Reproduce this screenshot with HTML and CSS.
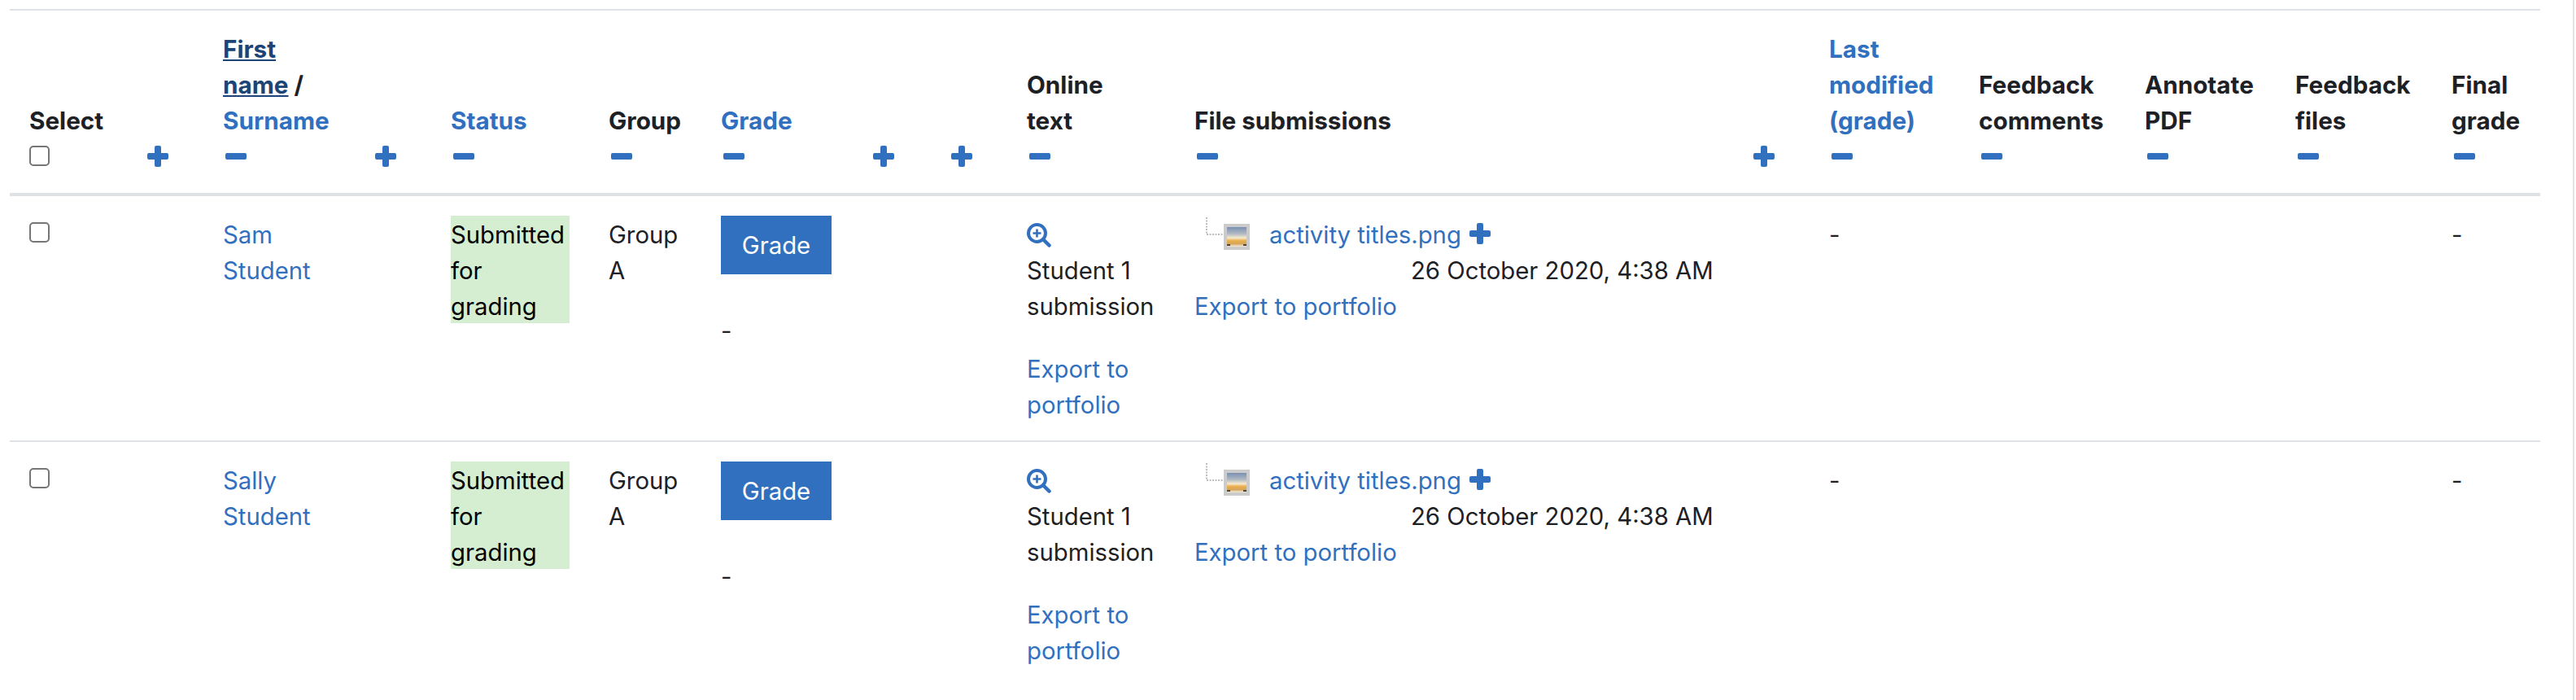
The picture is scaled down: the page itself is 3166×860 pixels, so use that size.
FILE: index.html
```html
<!DOCTYPE html>
<html lang="en">
<head>
<meta charset="utf-8">
<title>Submissions</title>
<link rel="stylesheet" href="styles.css">
</head>
<body>
<svg class="defs" width="0" height="0" aria-hidden="true">
  <symbol id="plus" viewBox="0 0 26 26"><path d="M11 0h4a2 2 0 0 1 2 2v7h7a2 2 0 0 1 2 2v4a2 2 0 0 1-2 2h-7v7a2 2 0 0 1-2 2h-4a2 2 0 0 1-2-2v-7H2a2 2 0 0 1-2-2v-4a2 2 0 0 1 2-2h7V2a2 2 0 0 1 2-2z"/></symbol>
  <symbol id="minus" viewBox="0 0 26 8"><rect width="26" height="8" rx="2"/></symbol>
  <symbol id="zoom" viewBox="0 0 30 30"><circle cx="12.5" cy="12.5" r="10.5" fill="none" stroke="currentColor" stroke-width="4"/><path d="M20 20l7.5 7.5" stroke="currentColor" stroke-width="4.5" stroke-linecap="round"/><path d="M12.5 7.5v10M7.5 12.5h10" stroke="currentColor" stroke-width="2.6"/></symbol>
  <symbol id="tree" viewBox="0 0 22 22"><path d="M1 0v21h21" fill="none" stroke="#bdbdbd" stroke-width="2" stroke-dasharray="2 1.5"/></symbol>
  <linearGradient id="sky" x1="0" y1="0" x2="0" y2="1">
    <stop offset="0" stop-color="#7a90b2"/><stop offset=".35" stop-color="#b3bac4"/><stop offset=".55" stop-color="#f6ead0"/><stop offset=".7" stop-color="#eaae48"/><stop offset=".85" stop-color="#d4a55a"/><stop offset="1" stop-color="#f3ecdc"/>
  </linearGradient>
  <symbol id="thumb" viewBox="0 0 32 32"><rect width="32" height="32" fill="#cbcbcb"/><rect x="4" y="4" width="24" height="24" fill="url(#sky)"/><rect x="4" y="25" width="4" height="2" fill="#4c4436"/><rect x="24" y="25" width="4" height="2" fill="#4c4436"/></symbol>
</svg>

<table class="grading">
  <colgroup>
    <col class="w-select"><col class="w-hidden"><col class="w-name"><col class="w-hidden"><col class="w-status"><col class="w-group"><col class="w-grade"><col class="w-hidden"><col class="w-hidden"><col class="w-online"><col class="w-file"><col class="w-hidden"><col class="w-last"><col class="w-fb"><col class="w-annot"><col class="w-files"><col class="w-final">
  </colgroup>
  <thead>
    <tr>
      <th><div>Select</div><div class="cmd"><input type="checkbox" class="check"></div></th>
      <th><div class="cmd"><svg class="ic plus"><use href="#plus"/></svg></div></th>
      <th><div><a class="active" href="#">First name</a> / <a href="#">Surname</a></div><div class="cmd"><svg class="ic minus"><use href="#minus"/></svg></div></th>
      <th><div class="cmd"><svg class="ic plus"><use href="#plus"/></svg></div></th>
      <th><div><a href="#">Status</a></div><div class="cmd"><svg class="ic minus"><use href="#minus"/></svg></div></th>
      <th><div>Group</div><div class="cmd"><svg class="ic minus"><use href="#minus"/></svg></div></th>
      <th><div><a href="#">Grade</a></div><div class="cmd"><svg class="ic minus"><use href="#minus"/></svg></div></th>
      <th><div class="cmd"><svg class="ic plus"><use href="#plus"/></svg></div></th>
      <th><div class="cmd"><svg class="ic plus"><use href="#plus"/></svg></div></th>
      <th><div>Online<br>text</div><div class="cmd"><svg class="ic minus"><use href="#minus"/></svg></div></th>
      <th><div>File submissions</div><div class="cmd"><svg class="ic minus"><use href="#minus"/></svg></div></th>
      <th><div class="cmd"><svg class="ic plus"><use href="#plus"/></svg></div></th>
      <th><div><a href="#">Last modified (grade)</a></div><div class="cmd"><svg class="ic minus"><use href="#minus"/></svg></div></th>
      <th><div>Feedback comments</div><div class="cmd"><svg class="ic minus"><use href="#minus"/></svg></div></th>
      <th><div>Annotate PDF</div><div class="cmd"><svg class="ic minus"><use href="#minus"/></svg></div></th>
      <th><div>Feedback files</div><div class="cmd"><svg class="ic minus"><use href="#minus"/></svg></div></th>
      <th><div>Final grade</div><div class="cmd"><svg class="ic minus"><use href="#minus"/></svg></div></th>
    </tr>
  </thead>
  <tbody>
    <tr>
      <td><input type="checkbox" class="check check-row"></td>
      <td></td>
      <td><a href="#">Sam Student</a></td>
      <td></td>
      <td><div class="submitted">Submitted for grading</div></td>
      <td>Group A</td>
      <td><a class="btn" href="#">Grade</a><div class="nograde">-</div></td>
      <td></td>
      <td></td>
      <td><svg class="ic zoom"><use href="#zoom"/></svg><div>Student 1 submission</div><p class="export"><a href="#">Export to portfolio</a></p></td>
      <td>
        <div class="fileline"><svg class="tree"><use href="#tree"/></svg><svg class="thumb"><use href="#thumb"/></svg><a class="fname" href="#">activity titles.png</a><svg class="ic plus inline"><use href="#plus"/></svg></div>
        <div class="filedate">26 October 2020, 4:38 AM</div>
        <a href="#">Export to portfolio</a>
      </td>
      <td></td>
      <td>-</td>
      <td></td>
      <td></td>
      <td></td>
      <td>-</td>
    </tr>
    <tr>
      <td><input type="checkbox" class="check check-row"></td>
      <td></td>
      <td><a href="#">Sally Student</a></td>
      <td></td>
      <td><div class="submitted">Submitted for grading</div></td>
      <td>Group A</td>
      <td><a class="btn" href="#">Grade</a><div class="nograde">-</div></td>
      <td></td>
      <td></td>
      <td><svg class="ic zoom"><use href="#zoom"/></svg><div>Student 1 submission</div><p class="export"><a href="#">Export to portfolio</a></p></td>
      <td>
        <div class="fileline"><svg class="tree"><use href="#tree"/></svg><svg class="thumb"><use href="#thumb"/></svg><a class="fname" href="#">activity titles.png</a><svg class="ic plus inline"><use href="#plus"/></svg></div>
        <div class="filedate">26 October 2020, 4:38 AM</div>
        <a href="#">Export to portfolio</a>
      </td>
      <td></td>
      <td>-</td>
      <td></td>
      <td></td>
      <td></td>
      <td>-</td>
    </tr>
  </tbody>
</table>
</body>
</html>
```
FILE: styles.css
```css
* { box-sizing: border-box; }
html, body { background: #fff; }
body {
  margin: 0 2px 0 0;
  padding: 11px 0 0 12px;
  height: 860px;
  overflow: hidden;
  border-right: 2px solid #e2e2e2;
  font-family: Inter, "Liberation Sans", sans-serif;
  font-size: 29.7px;
  line-height: 44px;
  color: #1d2125;
}
.defs { position: absolute; }
a { color: #3170bf; text-decoration: none; }
a.active { color: #1d4476; text-decoration: underline; }

.grading { width: 3110px; table-layout: fixed; border-collapse: collapse; }
.w-select { width: 142px; }
.w-hidden { width: 96px; }
.w-name { width: 184px; }
.w-status { width: 194px; }
.w-group { width: 138px; }
.w-grade { width: 184px; }
.w-online { width: 206px; }
.w-file { width: 684px; }
.w-last { width: 184px; }
.w-fb { width: 204px; }
.w-annot { width: 185px; }
.w-files { width: 192px; }
.w-final { width: 133px; }

th, td { padding: 24px; text-align: left; vertical-align: top; }
td { padding-top: 26px; padding-bottom: 21px; font-size: 29.3px; }
th { padding-top: 25px; vertical-align: bottom; font-weight: 700; border-top: 2px solid #dee2e6; border-bottom: 4px solid #dee2e6; }
tbody tr + tr td { border-top: 2px solid #dee2e6; }

.cmd { height: 43px; display: flex; align-items: center; }
.ic { display: block; fill: #3170bf; color: #3170bf; }
.plus { width: 26px; height: 26px; margin-left: 3px; }
.minus { width: 26px; height: 8px; margin-left: 3px; }
.zoom { width: 30px; height: 30px; margin-top: 7px; margin-bottom: 7px; }
.inline { margin: 7px 0 0 10px; flex: none; }

.check { display: block; width: 25px; height: 25px; margin: 0; appearance: none; background: #fff; border: 2px solid #767676; border-radius: 5px; }
.check-row { margin-top: 6px; }

.submitted { height: 132px; margin-top: -2px; padding-top: 2px; background: #d5edd0; color: #000; }
.btn { display: block; width: 136px; height: 72px; margin-top: -2px; line-height: 74px; text-align: center; color: #fff; background: #3170bf; }
.nograde { margin-top: 48px; }
.export { margin: 33px 0 0; }

.fileline { display: flex; align-items: flex-start; height: 44px; padding-left: 14px; }
.tree { width: 22px; height: 22px; flex: none; }
.thumb { width: 32px; height: 32px; margin-top: 8px; flex: none; }
.fname { margin-left: 24px; }
.filedate { margin-left: 266px; white-space: nowrap; }
```
